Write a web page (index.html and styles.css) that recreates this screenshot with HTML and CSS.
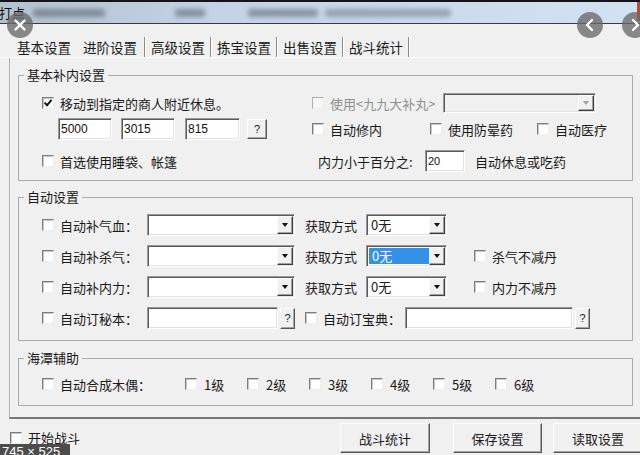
FILE: index.html
```html
<!DOCTYPE html>
<html lang="zh-CN">
<head>
<meta charset="utf-8">
<title>打点</title>
<link rel="stylesheet" href="styles.css">
</head>
<body>
<div class="win">
  <div class="titlebar">
    <span class="title">打点</span>
    <span class="blur b1"></span>
    <span class="blur b2"></span>
    <span class="blur b3"></span>
    <span class="blur b4"></span>
    <span class="closebit"></span>
  </div>

  <div class="tabs">
    <span class="tab t1">基本设置</span>
    <span class="tab t2">进阶设置</span>
    <span class="tab">高级设置</span>
    <span class="tab">拣宝设置</span>
    <span class="tab">出售设置</span>
    <span class="tab">战斗统计</span>
  </div>

  <div class="panel">
    <fieldset class="group g1">
      <legend>基本补内设置</legend>
      <div class="row">
        <div class="left">
          <label class="chk"><span class="cb"><svg class="tick" viewBox="0 0 10 10"><path d="M1.6 4.6 L4 7.2 L8.6 1.8"/></svg></span>移动到指定的商人附近休息。</label>
        </div>
        <label class="chk dis w131"><span class="cb"></span>使用&lt;九九大补丸&gt;</label>
        <span class="combo dis w153"><span class="val"></span><span class="drop"></span></span>
      </div>
      <div class="row r2">
        <div class="left">
          <span class="field num w54 first">5000</span>
          <span class="field num w54 gap9">3015</span>
          <span class="field num w55 gap10">815</span>
          <span class="qbtn q20">?</span>
        </div>
        <label class="chk w118"><span class="cb"></span>自动修内</label>
        <label class="chk w107"><span class="cb"></span>使用防晕药</label>
        <label class="chk"><span class="cb"></span>自动医疗</label>
      </div>
      <div class="row r3">
        <div class="left">
          <label class="chk"><span class="cb"></span>首选使用睡袋、帐篷</label>
        </div>
        <span class="pct">内力小于百分之:</span>
        <span class="field num w40 small">20</span>
        <span class="after">自动休息或吃药</span>
      </div>
    </fieldset>

    <fieldset class="group g2">
      <legend>自动设置</legend>
      <div class="row">
        <label class="chk w105"><span class="cb"></span>自动补气血：</label>
        <span class="combo w148"><span class="val"></span><span class="drop"></span></span>
        <span class="how">获取方式</span>
        <span class="combo w81"><span class="val">0无</span><span class="drop"></span></span>
      </div>
      <div class="row r-next">
        <label class="chk w105"><span class="cb"></span>自动补杀气：</label>
        <span class="combo w148"><span class="val"></span><span class="drop"></span></span>
        <span class="how">获取方式</span>
        <span class="combo w81"><span class="val sel">0无</span><span class="drop"></span></span>
        <label class="chk extra"><span class="cb"></span>杀气不减丹</label>
      </div>
      <div class="row r-next">
        <label class="chk w105"><span class="cb"></span>自动补内力：</label>
        <span class="combo w148"><span class="val"></span><span class="drop"></span></span>
        <span class="how">获取方式</span>
        <span class="combo w81"><span class="val">0无</span><span class="drop"></span></span>
        <label class="chk extra"><span class="cb"></span>内力不减丹</label>
      </div>
      <div class="row r-next">
        <label class="chk w105"><span class="cb"></span>自动订秘本：</label>
        <span class="field w131"></span>
        <span class="qbtn q15">?</span>
        <label class="chk w100 ml10"><span class="cb"></span>自动订宝典：</label>
        <span class="field w168"></span>
        <span class="qbtn q15">?</span>
      </div>
    </fieldset>

    <fieldset class="group g3">
      <legend>海潭辅助</legend>
      <div class="row r-short">
        <label class="chk w143"><span class="cb"></span>自动合成木偶：</label>
        <label class="chk lv w62"><span class="cb"></span>1级</label>
        <label class="chk lv w62"><span class="cb"></span>2级</label>
        <label class="chk lv w62"><span class="cb"></span>3级</label>
        <label class="chk lv w62"><span class="cb"></span>4级</label>
        <label class="chk lv w62"><span class="cb"></span>5级</label>
        <label class="chk lv"><span class="cb"></span>6级</label>
      </div>
    </fieldset>
  </div>

  <div class="footer">
    <label class="chk start"><span class="cb"></span>开始战斗</label>
    <span class="btn b-stat">战斗统计</span>
    <span class="btn b-save">保存设置</span>
    <span class="btn b-load">读取设置</span>
  </div>

  <span class="nav close"><svg viewBox="0 0 26 26"><path d="M8.5 8.5 L17.5 17.5 M17.5 8.5 L8.5 17.5"/></svg></span>
  <span class="nav prev"><svg viewBox="0 0 26 26"><path d="M15 8 L10 13 L15 18"/></svg></span>
  <span class="nav next"><svg viewBox="0 0 26 26"><path d="M11 8 L16 13 L11 18"/></svg></span>
  <span class="dims">745 × 525</span>
</div>
</body>
</html>
```

FILE: styles.css
```css
* { box-sizing: border-box; }
html, body { margin: 0; padding: 0; }
body {
  width: 640px;
  height: 455px;
  overflow: hidden;
  background: #f0f0f0;
  font-family: "Noto Sans CJK SC", "Noto Sans", sans-serif;
  font-size: 13px;
  color: #1a1a1a;
}
.win { position: relative; width: 640px; height: 455px; overflow: hidden; }

/* title bar */
.titlebar {
  height: 24px;
  border-top: 2px solid #141414;
  border-bottom: 1px solid #3a3a3a;
  background: linear-gradient(to right, #b3c0cf 0%, #c4d4e6 35%, #d2e2f3 100%);
  display: flex;
  align-items: center;
}
.title { margin-left: -1px; line-height: 16px; color: #111; }
.blur {
  height: 8px;
  background: #46505c;
  opacity: .5;
  filter: blur(2.5px);
  border-radius: 3px;
}
.b1 { margin-left: 8px; width: 72px; }
.b2 { margin-left: 70px; width: 30px; }
.b3 { margin-left: 43px; width: 70px; }
.b4 { margin-left: 7px; width: 126px; opacity: .4; }
.closebit { margin-left: auto; align-self: flex-start; width: 3px; height: 19px; background: #c9442f; }

/* tabs */
.tabs {
  height: 34px;
  border-bottom: 1px solid #fff;
  display: flex;
  align-items: flex-end;
  padding-left: 10px;
}
.tab {
  height: 20px;
  line-height: 20px;
  font-size: 13.5px;
  padding: 0 5px 0 6px;
  border-right: 1px solid #8a8a8a;
  box-shadow: 1px 0 0 #fff;
}
.tab.t1 { padding: 0 6px 0 7px; border-right: none; box-shadow: none; }
.tab.t2 { padding: 0 7px 0 6px; }

/* panel + group boxes */
.panel {
  margin-left: 9px;
  border-left: 1px solid #b4b4b4;
  border-bottom: 2px solid #777;
  padding: 9px 0 11px 0;
}
.group {
  margin: 0 0 0 8px;
  width: 615px;
  min-width: 0;
  padding: 0;
  border: 1px solid #ababab;
}
.group legend {
  margin-left: 5px;
  padding: 0 3px;
  line-height: 16px;
  font-size: 13px;
}
.g1 { padding: 9px 0 8px 0; }
.g2 { margin-top: 8px; padding: 9px 0 11px 0; }
.g3 { margin-top: 9px; padding: 8px 0 11px 0; }

.row {
  display: flex;
  align-items: center;
  height: 22px;
  padding-left: 23px;
}
.r2 { margin-top: 4px; }
.r3 { margin-top: 10px; }
.r-next { margin-top: 9px; }
.r-short { height: 20px; }
.left { width: 270px; display: flex; align-items: center; flex: none; }

/* checkbox labels */
.chk { display: flex; align-items: center; gap: 6px; white-space: nowrap; flex: none; }
.cb {
  width: 12px;
  height: 12px;
  flex: none;
  background: #fff;
  border-top: 1px solid #7c7c7c;
  border-left: 1px solid #7c7c7c;
  border-right: 1px solid #ececec;
  border-bottom: 1px solid #ececec;
  box-shadow: inset 1px 1px 0 #c8c8c8;
  display: flex;
}
.tick { width: 10px; height: 10px; }
.tick path { fill: none; stroke: #111; stroke-width: 1.9; }
.chk.dis { color: #8f8f8f; }
.chk.dis .cb { background: #f6f6f6; border-top-color: #b0b0b0; border-left-color: #b0b0b0; box-shadow: none; }
.lv { gap: 7px; }

.w62 { width: 62px; }
.w100 { width: 100px; }
.w105 { width: 105px; }
.w107 { width: 107px; }
.w118 { width: 118px; }
.w131 { width: 131px; }
.w143 { width: 143px; }
.ml10 { margin-left: 10px; }
.extra { margin-left: 27px; }

/* text fields */
.field {
  height: 22px;
  flex: none;
  background: #fff;
  border: 1px solid;
  border-color: #9a9a9a #fff #fff #9a9a9a;
  box-shadow: inset 1px 1px 0 #5a5a5a, inset -1px -1px 0 #e2e2e2;
}
.field.num {
  font-family: "Liberation Sans", "DejaVu Sans", sans-serif;
  font-size: 12px;
  line-height: 20px;
  padding-left: 2px;
  color: #111;
}
.field.small { font-size: 11px; }
.w40 { width: 40px; }
.w54 { width: 54px; }
.w55 { width: 55px; }
.w168 { width: 168px; }
.field.w131 { width: 131px; }
.first { margin-left: 16px; }
.gap9 { margin-left: 9px; }
.gap10 { margin-left: 10px; }

.pct { width: 113px; padding-left: 6px; flex: none; white-space: nowrap; }
.after { margin-left: 10px; white-space: nowrap; }
.how { margin-left: 10px; margin-right: 9px; white-space: nowrap; }

/* combo boxes */
.combo {
  display: flex;
  flex: none;
  height: 22px;
  background: #fff;
  border: 1px solid;
  border-color: #9a9a9a #fff #fff #9a9a9a;
  box-shadow: inset 1px 1px 0 #5a5a5a, inset -1px -1px 0 #e2e2e2;
  padding: 1px;
}
.w148 { width: 148px; }
.w81 { width: 81px; }
.w153 { width: 153px; height: 20px; }
.combo .val {
  flex: 1;
  padding-left: 3px;
  line-height: 18px;
  font-size: 13px;
  white-space: nowrap;
}
.combo .val.sel { background: #3590e8; color: #fff; margin: 1px 0 1px 1px; line-height: 16px; }
.drop {
  width: 16px;
  flex: none;
  background: #f0f0f0;
  border: 1px solid;
  border-color: #fafafa #3e3e3e #3e3e3e #fafafa;
  box-shadow: inset -1px -1px 0 #a0a0a0;
  display: flex;
  align-items: center;
  justify-content: center;
}
.drop::after {
  content: "";
  width: 0;
  height: 0;
  border-left: 3.5px solid transparent;
  border-right: 3.5px solid transparent;
  border-top: 4px solid #111;
}
.combo.dis { background: #f0f0f0; }
.combo.dis .drop::after { border-top-color: #a0a0a0; }

/* buttons */
.qbtn, .btn {
  flex: none;
  background: #f0f0f0;
  border: 1px solid;
  border-color: #fdfdfd #555 #555 #fdfdfd;
  box-shadow: inset -1px -1px 0 #a3a3a3;
  display: flex;
  align-items: center;
  justify-content: center;
}
.qbtn { font-family: "Liberation Sans", "DejaVu Sans", sans-serif; font-size: 11px; color: #222; }
.q20 { width: 20px; height: 20px; margin-left: 7px; }
.q15 { width: 15px; height: 21px; margin-left: 2px; }

/* footer */
.footer {
  height: 36px;
  display: flex;
  align-items: flex-start;
  padding-top: 4px;
}
.start { width: 330px; margin-left: 10px; margin-top: 6px; line-height: 17px; }
.btn { height: 30px; font-size: 13px; }
.b-stat { width: 90px; }
.b-save { width: 89px; margin-left: 23px; }
.b-load { width: 90px; margin-left: 11px; }

/* overlays from the image viewer */
.nav {
  position: absolute;
  top: 12px;
  width: 26px;
  height: 26px;
  border-radius: 50%;
  background: rgba(105, 105, 105, .78);
  display: flex;
}
.nav svg { width: 26px; height: 26px; }
.nav path { fill: none; stroke: #fff; stroke-width: 2.4; stroke-linecap: round; stroke-linejoin: round; }
.nav.close { left: 7px; }
.nav.prev { left: 577px; }
.nav.next { left: 622px; }
.dims {
  position: absolute;
  left: 0;
  top: 444px;
  width: 70px;
  height: 11px;
  background: #4c4c4c;
  color: #fff;
  font-family: "Liberation Sans", "DejaVu Sans", sans-serif;
  font-size: 13px;
  line-height: 16px;
  padding-left: 2px;
  white-space: nowrap;
  overflow: hidden;
}
```
